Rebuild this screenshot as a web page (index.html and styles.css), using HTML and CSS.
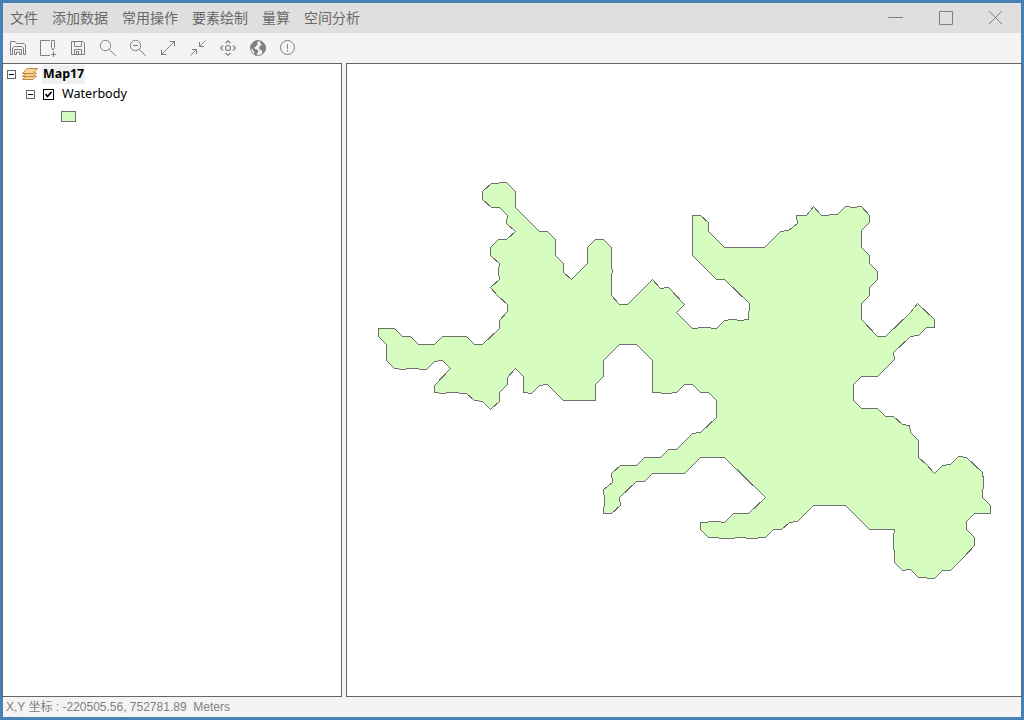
FILE: index.html
```html
<!DOCTYPE html>
<html lang="zh-CN">
<head>
<meta charset="utf-8">
<title>Map17</title>
<link rel="stylesheet" href="styles.css">
</head>
<body>
<div class="window">
  <header class="titlebar">
    <nav class="menu"><span>文件</span><span>添加数据</span><span>常用操作</span><span>要素绘制</span><span>量算</span><span>空间分析</span></nav>
    <div class="controls">
      <svg width="16" height="16" viewBox="0 0 16 16"><path d="M0 7.500H15"/></svg>
      <svg width="16" height="16" viewBox="0 0 16 16"><path d="M1.500 1.500h13v13h-13z"/></svg>
      <svg width="16" height="16" viewBox="0 0 16 16"><path d="M1 1l13 13M14 1l-13 13"/></svg>
    </div>
  </header>
  <div class="toolbar">
    <svg viewBox="0 0 18 18"><path d="M3.500 15.500H1.500V2.500H6L7.500 4.500H15L16.500 6V15.500H14.500M3.500 15.500V9L5 7.500H13L14.500 9V15.500M5.500 15.500V10.500H12.500V15.500H10.500V13H7.500V15.500H5.500"/></svg>
    <svg viewBox="0 0 18 18"><path d="M11 1.500H1.500V16.500H11M12.500 1.500H15.500V8.500L14 11L12.500 8.500ZM14.500 12.500V18M12 15.500H17"/></svg>
    <svg viewBox="0 0 18 18"><path d="M2.500 2.500H14L15.500 4V15.500H2.500ZM5.500 2.500V7.500H12.500V2.500M5.500 15.500V10.500H12.500V15.500M7.500 15V12.500H9.500V15"/></svg>
    <svg viewBox="0 0 18 18"><circle cx="6.500" cy="6.500" r="5.200"/><path d="M10.200 10.500L16.800 16.800"/></svg>
    <svg viewBox="0 0 18 18"><circle cx="6.500" cy="6.500" r="5.200"/><path d="M10.200 10.500L16.800 16.800M4 6.500H9"/></svg>
    <svg viewBox="0 0 18 18"><path d="M2.500 15.500L15.500 2.500M10.500 2.500H15.500V7.500M2.500 10.500V15.500H7.500"/></svg>
    <svg viewBox="0 0 18 18"><path d="M1.500 16.500L7.500 10.500M3 10.500H7.500V15M16.500 1.500L10.500 7.500M10.500 3V7.500H15"/></svg>
    <svg class="pan" viewBox="0 0 18 18"><circle cx="9" cy="9" r="2.500"/><path d="M6.500 4L9 1.700L11.500 4M6.500 14L9 16.300L11.500 14M4 6.500L1.700 9L4 11.500M14 6.500L16.300 9L14 11.500"/></svg>
    <svg viewBox="0 0 18 18"><circle cx="9" cy="9" r="7.500"/><path class="land" d="M1.500 9L2 5.500L5 2.500L8 1.500L9.500 2.500L8 4L9 5.500L7.500 6.500L6.500 8L5 8.500L6 10L8.500 10.500L9.500 12.500L8 14.500L7.500 16.500L5.500 16L5 12.500L3 10ZM10.500 2L14 3.500L16.500 7.500L16 11.500L14 14.500L13 14L13 11.500L10.500 10.500L10 8.500L11.500 6.500L13 6L11.500 4.500Z"/></svg>
    <svg viewBox="0 0 18 18"><circle cx="8.500" cy="8.500" r="7"/><path d="M8.500 5V10M8.500 11V12.500"/></svg>
  </div>
  <main class="workspace">
    <section class="tree">
      <div class="row root">
        <span class="expander"></span>
        <svg class="layers" width="16" height="14" viewBox="0 0 16 14"><path d="M.5 12.500L4.500 9H14.500L11 12.500Z"/><path d="M.5 9.500L4.500 6H14.500L11 9.500Z"/><path d="M.5 6.500L5 1.500H15.500L11 6.500Z"/></svg>
        <b class="name">Map17</b>
      </div>
      <div class="row layer">
        <span class="expander"></span>
        <svg class="check" width="11" height="11" viewBox="0 0 11 11"><path class="box" d="M.5.500h10v10h-10z"/><path class="tick" d="M2.500 5L4.500 7.500L8.500 3"/></svg>
        <span class="label">Waterbody</span>
      </div>
      <div class="row legend"><span class="swatch"></span></div>
    </section>
    <section class="map">
      <svg width="674" height="632" viewBox="346.500 63.500 674 632">
        <polygon class="water" points="482,191 491,183 506,182 515,191 515,207 539,231 547,231 555,239 555,255 563,263 563,272 571,279 587,263 587,247 595,239 603,239 611,247 611,266 612,270 611,276 611,295 619,304 627,304 652,279 660,288 668,287 684,304 676,312 692,328 704,327 716,328 724,320 732,319 740,320 748,319 749,303 724,279 716,279 692,255 692,215 700,215 708,222 708,231 724,247 764,247 780,231 788,230 797,223 796,215 806,215 813,206 821,215 837,214 845,206 853,207 861,206 869,215 869,222 861,230 861,247 869,255 869,263 877,271 877,279 869,287 869,295 861,303 861,319 877,336 885,336 910,312 917,303 934,319 934,327 926,327 918,335 910,336 893,352 894,359 877,376 861,376 853,384 853,400 861,408 877,408 885,416 893,416 902,424 909,425 910,432 918,440 918,457 926,464 934,473 942,465 950,464 958,456 966,457 982,472 983,480 982,497 990,505 990,513 974,513 966,521 966,529 974,537 974,545 963,557 950,570 942,570 934,578 918,577 910,569 902,570 894,562 893,536 894,529 869,529 845,505 813,505 797,521 789,522 781,529 773,529 765,537 750,538 741,537 729,538 708,537 700,529 700,522 716,521 724,522 733,513 748,513 765,497 724,457 700,457 684,473 652,473 644,481 636,481 619,497 620,505 611,513 603,513 604,500 603,489 612,482 611,473 620,465 636,465 644,457 660,457 668,449 676,449 692,433 700,432 716,417 716,400 708,392 700,392 692,384 684,384 676,392 668,393 652,392 652,360 636,344 619,344 603,360 603,376 595,384 595,400 563,400 547,384 539,385 531,393 523,392 523,376 515,368 507,377 507,384 499,392 499,401 490,409 482,401 474,400 466,393 450,392 442,393 434,392 434,385 450,368 442,360 434,361 426,369 410,368 402,369 394,368 386,360 386,344 378,336 378,328 394,328 402,336 410,336 418,344 434,344 442,336 466,336 474,344 482,344 499,328 499,320 507,311 507,304 498,296 490,287 499,279 498,271 499,263 490,255 490,247 498,239 506,239 515,231 506,223 507,215 499,207 491,207 482,199"/>
      </svg>
    </section>
  </main>
  <footer class="status">X,Y 坐标 : -220505.56, 752781.89&nbsp; Meters</footer>
</div>
</body>
</html>
```

FILE: styles.css
```css
* { box-sizing: border-box; }
body { margin: 0; }
.window {
  width: 1024px;
  height: 720px;
  border: 3px solid #4682b4;
  background: #f4f4f4;
  display: flex;
  flex-direction: column;
  font-family: "Liberation Sans", "Noto Sans CJK SC", sans-serif;
}
.titlebar {
  height: 30px;
  background: #dfdfdf;
  display: flex;
  justify-content: space-between;
  align-items: center;
}
.menu { display: flex; font: 14px/28px "Noto Sans CJK SC", sans-serif; height: 30px; color: #686868; }
.menu span { padding: 0 7px; }
.controls { display: flex; gap: 34px; padding-right: 17px; }
.controls svg { display: block; fill: none; stroke: #808080; }
.toolbar { height: 30px; padding: 6px; display: flex; gap: 12px; }
.toolbar svg { width: 18px; height: 18px; fill: none; stroke: #808080; }
.toolbar .pan { stroke-width: 1.200; }
.toolbar .land { fill: #808080; stroke: none; }
.workspace { height: 634px; margin: 0 -1px; display: flex; gap: 4px; }
.tree, .map { background: #fff; border: 1px solid #666; }
.tree { width: 340px; }
.map { width: 676px; }
.map svg { display: block; }
.water { fill: #d7fcc0; stroke: #6e6e6e; stroke-width: 1; shape-rendering: crispEdges; }
.row { display: flex; align-items: center; height: 20px; color: #000; }
.root { padding-left: 4px; }
.expander {
  width: 9px;
  height: 9px;
  border: 1px solid #666;
  background: linear-gradient(#000, #000) center / 5px 1px no-repeat;
}
.layers { margin-left: 6px; fill: #fbd592; stroke: #b97c30; stroke-width: .9; }
.name { font: bold 12.4px/17px "Open Sans", sans-serif; background: #f0f0f0; margin-left: 4px; padding: 0 1px 2px; }
.layer { padding-left: 23px; }
.check { margin-left: 8px; }
.check .box { fill: #fff; stroke: #000; shape-rendering: crispEdges; }
.check .tick { fill: none; stroke: #000; stroke-width: 1.700; }
.label { font: 12.6px/20px "Noto Sans", sans-serif; margin-left: 8px; }
.legend { height: 25px; padding-left: 58px; }
.swatch { width: 15px; height: 11px; background: #d7fcc0; border: 1px solid #6e6e6e; }
.status { height: 20px; padding-left: 3px; font-size: 12px; line-height: 20px; color: #808080; white-space: nowrap; }
```
